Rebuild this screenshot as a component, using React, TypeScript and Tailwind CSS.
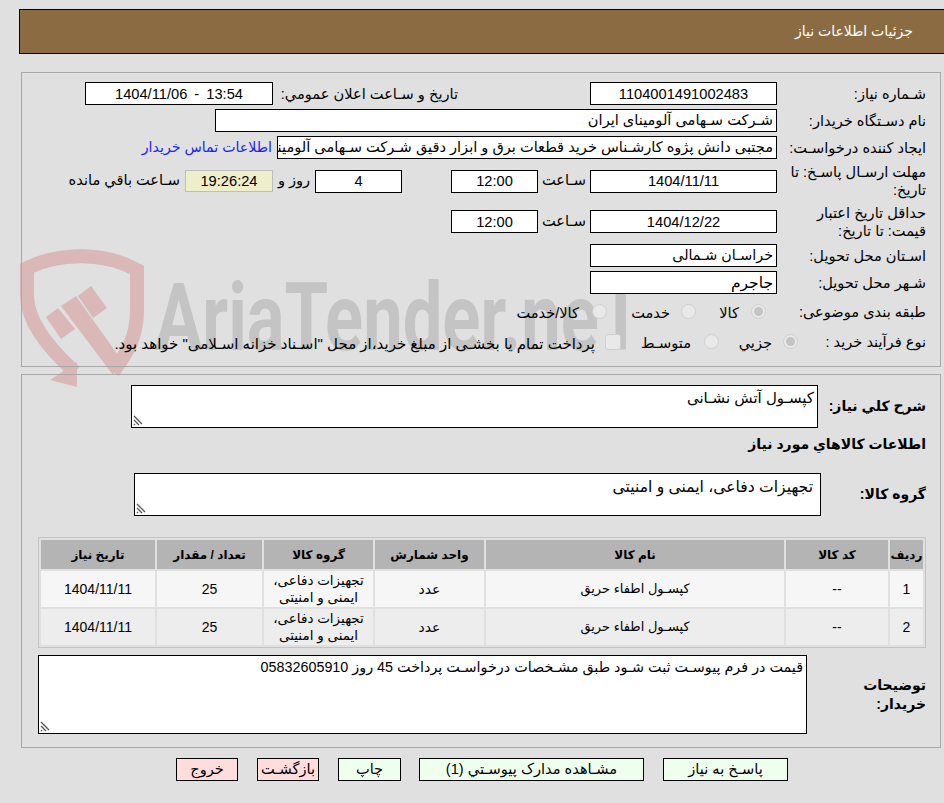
import React from "react";

const Box = ({ className = "", children }: { className?: string; children?: React.ReactNode }) => (
  <div className={`h-[23px] shrink-0 border border-black bg-white flex items-center overflow-hidden whitespace-nowrap ${className}`}>{children}</div>
);
const Num = ({ className = "", children }: { className?: string; children?: React.ReactNode }) => (
  <Box className={`justify-center text-[14.67px] ${className}`}>{children}</Box>
);
const Label = ({ className = "", children }: { className?: string; children: React.ReactNode }) => (
  <div className={`shrink-0 leading-[18px] ${className}`}>{children}</div>
);
const Radio = ({ on }: { on?: boolean }) => (
  <span className="w-[15px] h-[15px] rounded-full border border-[#cfcfcf] bg-[#e9e9e9] flex items-center justify-center shrink-0">
    {on && <span className="w-[9px] h-[9px] rounded-full bg-[#c4c4c4]" />}
  </span>
);
const Grip = () => (
  <svg className="absolute left-[1px] bottom-[1px]" width="11" height="11" viewBox="0 0 11 11">
    <path d="M1 1l8 8M1 5l5 5M1 9l1 1" stroke="#555" strokeWidth="1.3" fill="none" />
  </svg>
);
const Area = ({ className = "", children }: { className?: string; children: React.ReactNode }) => (
  <div className={`relative shrink-0 border border-black bg-white ${className}`}>
    {children}
    <Grip />
  </div>
);
const Btn = ({ className = "", children }: { className?: string; children: React.ReactNode }) => (
  <div className={`h-[23px] border border-black flex items-center justify-center shrink-0 ${className}`}>{children}</div>
);

const rows = [1, 2];

export default function App() {
  return (
    <div dir="rtl" className="relative w-[944px] h-[803px] overflow-hidden bg-[#e0e0e0] text-black text-[14.6px] font-['Liberation_Sans','DejaVu_Sans',sans-serif]">
      <svg className="absolute left-0 top-0" width="944" height="803" viewBox="0 0 944 803">
        <path d="M75 372C45 345 27 320 27 295V268C60 252 105 252 137 270V310C137 340 125 355 113 372" fill="none" stroke="#dab8b8" strokeWidth="14" />
        <path d="M50 380L77 362L77 387Z" fill="#dab8b8" />
        <path d="M46 317L58 308L75 329L61 339ZM61 306L76 296L93 320L120 358L113 375ZM78 296L91 286L107 308L93 318Z" fill="#dab8b8" />
      </svg>
      <div dir="ltr" className="absolute left-[155px] top-[263px] origin-left scale-x-[0.75] text-[94px] leading-[110px] font-bold text-[#c4c4c4] font-['Roboto','Liberation_Sans',sans-serif] whitespace-nowrap">AriaTender.neT</div>

      <div className="relative pt-[9px] pl-[19px]">
        <div className="h-[45px] bg-[#8b6b42] border-y border-l border-black flex items-center pr-[31px] text-white text-[14px]">جزئیات اطلاعات نیاز</div>
      </div>

      <section className="relative mt-[18px] ml-[21px] mr-[3px] h-[295px] border border-[#a8a8a8] pt-[9px] pr-[14px]">
        <div className="flex items-center h-[23px]">
          <Label className="w-[149px]">شـماره نیاز:</Label>
          <Num className="w-[187px]">1104001491002483</Num>
          <Label className="mr-[132px] w-[185px]">تاریخ و سـاعت اعلان عمومي:</Label>
          <Num className="w-[188px] [word-spacing:3px]"><span dir="ltr">1404/11/06 - 13:54</span></Num>
        </div>
        <div className="flex items-center h-[23px] mt-[4px]">
          <Label className="w-[149px]">نام دسـتگاه خریدار:</Label>
          <Box className="w-[562px] pr-[3px]">شـرکت سـهامی آلومینای ایران</Box>
        </div>
        <div className="flex items-center h-[23px] mt-[4px]">
          <Label className="w-[149px]">ایجاد کننده درخواسـت:</Label>
          <Box className="w-[500px] pr-[3px]">مجتبی دانش پژوه کارشـناس خرید قطعات برق و ابزار دقیق شـرکت سـهامی آلومینای ایران</Box>
          <div className="mr-[5px] text-[#2222ee] text-[14.2px] whitespace-nowrap">اطلاعات تماس خریدار</div>
        </div>
        <div className="flex items-center h-[36px] mt-[4px]">
          <Label className="w-[149px]">مهلت ارسـال پاسـخ: تا<br />تاریخ:</Label>
          <Num className="w-[187px] h-[22px]">1404/11/11</Num>
          <div className="w-[52px] text-center shrink-0">سـاعت</div>
          <Num className="w-[87px] h-[22px]">12:00</Num>
          <div className="w-[49px] shrink-0" />
          <Num className="w-[87px] h-[22px]">4</Num>
          <div className="w-[42px] text-center shrink-0">روز و</div>
          <div className="w-[88px] h-[22px] shrink-0 border border-[#bdbdbd] bg-[#eeeecb] flex items-center justify-center text-[14.67px]">19:26:24</div>
          <div className="mr-[5px] whitespace-nowrap">سـاعت باقي مانده</div>
        </div>
        <div className="flex items-center h-[37px] mt-[4px]">
          <Label className="w-[149px]">حداقل تاریخ اعتبار<br />قیمت: تا تاریخ:</Label>
          <Num className="w-[187px]">1404/12/22</Num>
          <div className="w-[52px] text-center shrink-0">سـاعت</div>
          <Num className="w-[87px]">12:00</Num>
        </div>
        <div className="flex items-center h-[23px] mt-[4px]">
          <Label className="w-[149px]">اسـتان محل تحویل:</Label>
          <Box className="w-[187px] pr-[3px] text-[14.3px]">خراسـان شـمالی</Box>
        </div>
        <div className="flex items-center h-[23px] mt-[4px]">
          <Label className="w-[149px]">شـهر محل تحویل:</Label>
          <Box className="w-[187px] pr-[3px] text-[15.5px]">جاجرم</Box>
        </div>
        <div className="flex items-center h-[23px] mt-[6px]">
          <Label className="w-[160.5px]">طبقه بندی موضوعی:</Label>
          <Radio on />
          <span className="mr-[11.5px] w-[43.5px] mt-[5px]">کالا</span>
          <Radio />
          <span className="mr-[10.5px] w-[63.5px] mt-[5px]">خدمت</span>
          <Radio />
          <span className="mr-[12.5px] mt-[5px] whitespace-nowrap">کالا/خدمت</span>
        </div>
        <div className="flex items-center h-[23px] mt-[7px]">
          <Label className="w-[128.5px]">نوع فرآیند خرید :</Label>
          <Radio on />
          <span className="mr-[10.5px] w-[53.5px] mt-[5px] whitespace-nowrap">جزیي</span>
          <Radio />
          <span className="mr-[12.5px] w-[70px] mt-[5px]">متوسـط</span>
          <span className="w-[16px] h-[16px] rounded-[3px] border border-[#cfcfcf] bg-[#e9e9e9] shrink-0" />
          <span className="mr-[10px] mt-[5px] text-[15px] whitespace-nowrap">پرداخت تمام یا بخشـی از مبلغ خرید،از محل "اسـناد خزانه اسـلامی" خواهد بود.</span>
        </div>
      </section>

      <section className="relative mt-[7px] ml-[21px] mr-[3px] h-[374px] border border-[#a8a8a8] pt-[10px] pr-[14px]">
        <div className="flex items-center h-[43px]">
          <div className="w-[108px] font-bold text-[14px] shrink-0">شرح کلي نیاز:</div>
          <Area className="w-[687px] h-[43px] pr-[3px] pt-[2px] leading-[20px] text-[15px]">کپسـول آتش نشـانی</Area>
        </div>
        <div className="font-bold text-[14px] mt-[6px] leading-[20px]">اطلاعات کالاهاي مورد نیاز</div>
        <div className="flex items-center h-[43px] mt-[19px]">
          <div className="w-[105px] font-bold text-[14px] shrink-0">گروه کالا:</div>
          <Area className="w-[687px] h-[43px] pr-[7px] pt-[3px] leading-[20px] text-[15.6px]">تجهیزات دفاعی، ایمنی و امنیتی</Area>
        </div>
        <div className="mt-[21px] w-[888px] border border-[#c4c4c4]">
          <table className="w-full border-separate border-spacing-[2px] table-fixed text-[14px]">
            <thead>
              <tr className="h-[29px] bg-[#b4b4b4] text-[12px]">
                <th className="w-[33px] font-bold">ردیف</th>
                <th className="w-[102px] font-bold">کد کالا</th>
                <th className="w-[298px] font-bold">نام کالا</th>
                <th className="w-[109px] font-bold">واحد شمارش</th>
                <th className="w-[109px] font-bold">گروه کالا</th>
                <th className="w-[105px] font-bold">تعداد / مقدار</th>
                <th className="font-bold">تاریخ نیاز</th>
              </tr>
            </thead>
            <tbody>
              {rows.map((n) => (
                <tr key={n} className={`text-center h-[36px] ${n === 1 ? "bg-[#f6f6f6]" : "bg-[#ededed]"}`}>
                  <td>{n}</td>
                  <td>--</td>
                  <td className="text-[13px]">کپسـول اطفاء حریق</td>
                  <td>عدد</td>
                  <td className="leading-[17px] px-[4px] text-[13.5px]">تجهیزات دفاعی، ایمنی و امنیتی</td>
                  <td>25</td>
                  <td>1404/11/11</td>
                </tr>
              ))}
            </tbody>
          </table>
        </div>
        <div className="flex items-center h-[79px] mt-[7px]">
          <div className="w-[119px] font-bold text-[14px] shrink-0 leading-[19px] pl-[30px]">توضیحات خریدار:</div>
          <Area className="w-[769px] h-[79px] pr-[3px] pt-[1px] leading-[20px] text-[14.35px]">قیمت در فرم پیوسـت ثبت شـود طبق مشـخصات درخواسـت پرداخت 45 روز 05832605910</Area>
        </div>
      </section>

      <div className="relative flex mt-[10px] pr-[156px] gap-[19px]">
        <Btn className="w-[125px] bg-[#eeffee]">پاسـخ به نیاز</Btn>
        <Btn className="w-[225px] ml-[-1px] bg-[#eeffee]">مشـاهده مدارک پیوسـتي (1)</Btn>
        <Btn className="w-[63px] bg-[#eeffee]">چاپ</Btn>
        <Btn className="w-[62px] bg-[#ffdddd]">بازگشـت</Btn>
        <Btn className="w-[62px] bg-[#ffdddd]">خروج</Btn>
      </div>
    </div>
  );
}
